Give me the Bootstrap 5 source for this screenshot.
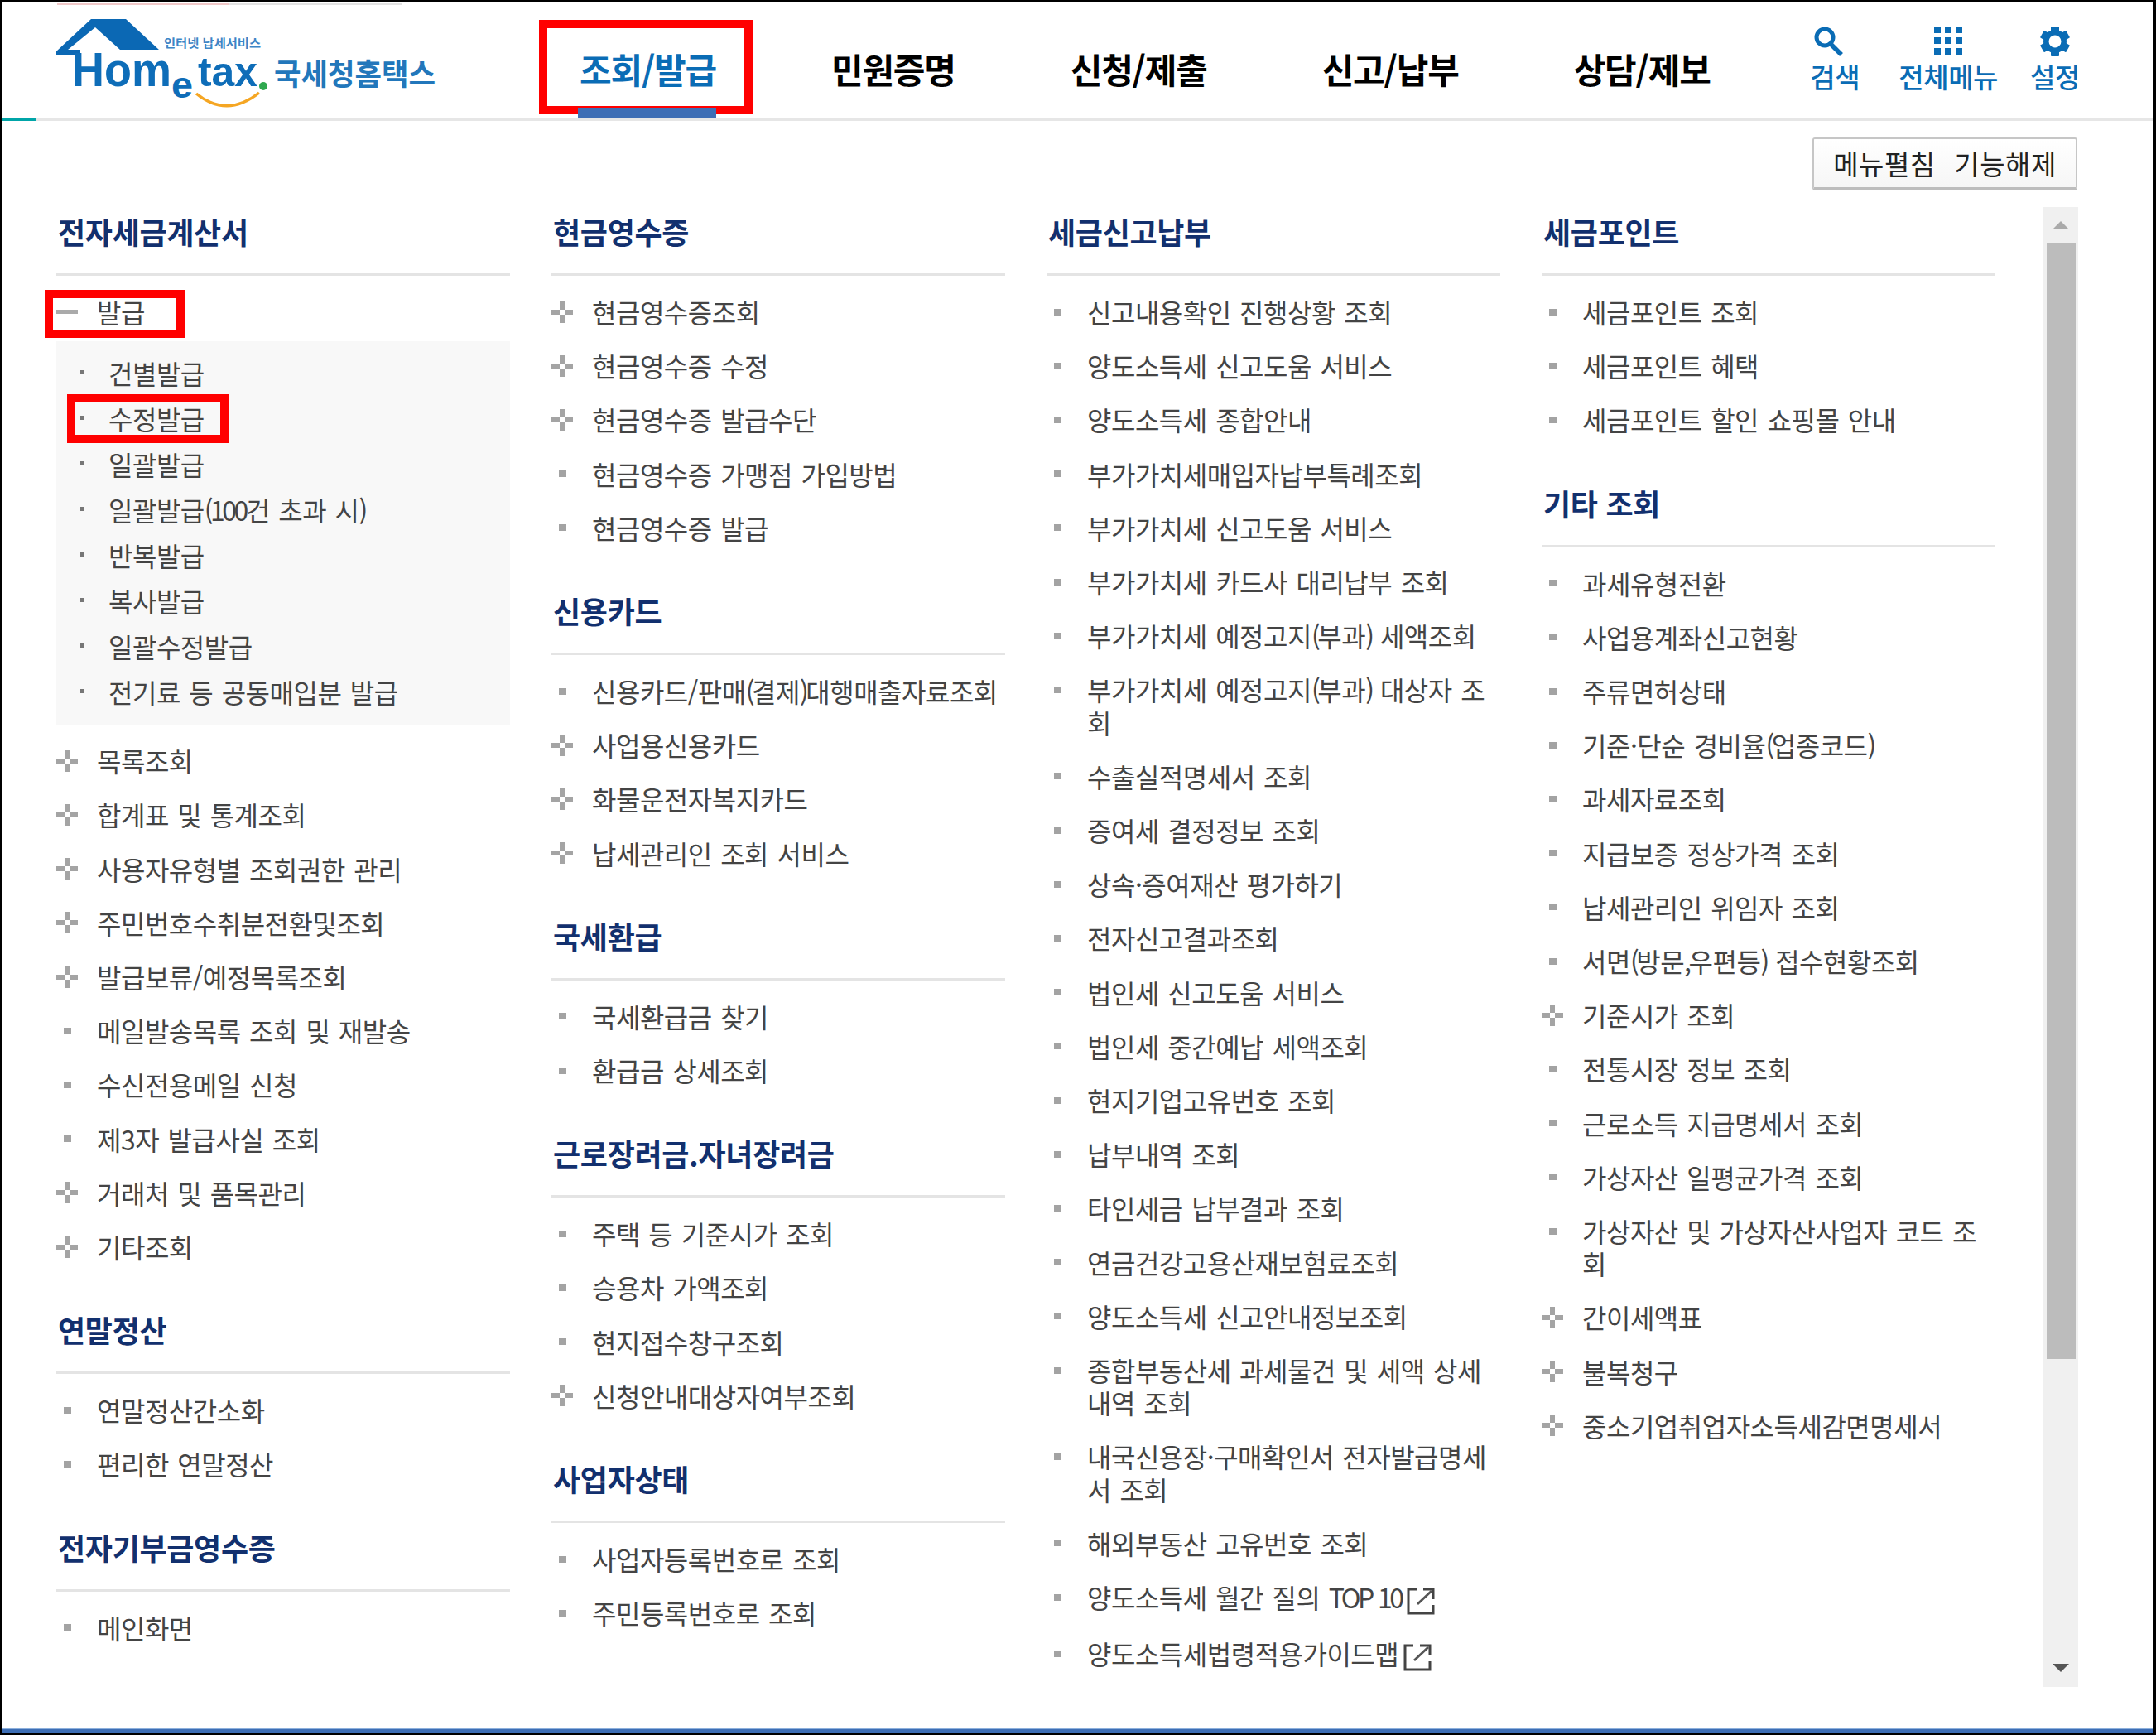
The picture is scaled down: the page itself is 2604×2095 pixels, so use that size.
<!DOCTYPE html>
<html lang="ko"><head><meta charset="utf-8"><title>Hometax</title>
<link href="https://cdn.jsdelivr.net/npm/bootstrap@5.3.0/dist/css/bootstrap.min.css" rel="stylesheet">
<style>
html,body{margin:0;background:#fff}
body{font-family:"Noto Sans CJK KR","Liberation Sans",sans-serif;color:#444}
.app{position:relative;width:2604px;height:2095px;border:solid #000;border-width:3px 4px 3px 3px;box-sizing:border-box}
.top-sliver{position:absolute;left:66px;top:1px;width:416px;height:2px;background:linear-gradient(90deg,#f0c8c8 0 50%,#e2e2e2 50%)}
.top-bar{position:relative;height:140px;border-bottom:3px solid #e6e6e6;padding:0 88px 0 63px;box-sizing:content-box}
.top-bar::before{content:"";position:absolute;left:0;bottom:-3px;width:40px;height:3px;background:#00a5a8}
.logo-svg{display:block;width:480px;height:140px;flex:none}
.main-nav{margin-left:154px;gap:139px}
.main-link{position:relative;display:block;padding-top:60px;font-size:42px;line-height:40px;letter-spacing:-1.2px;font-weight:700;color:#000;text-decoration:none;white-space:nowrap}
.main-link.on{color:#0a6cb5}
.main-link.on::after{content:"";position:absolute;left:-2px;right:0;top:127px;height:13px;background:#3d6eb5}
.tools{gap:39px}
.tool-link{display:flex;flex-direction:column;padding-top:29px;color:#0a6cb5;text-decoration:none;font-size:33px;line-height:44px;letter-spacing:-.4px;font-weight:500;white-space:nowrap}
.tool-link svg{display:block;height:36px;width:36px;margin-bottom:2px}
.redmark{position:absolute;border:10px solid #f00;pointer-events:none}
.rm-nav{left:-49px;top:21px;width:258px;height:114px}
.rm-a{left:-14px;top:6px;width:169px;height:58px}
.rm-b{left:13px;top:-1px;width:195px;height:59px}
.fold-btn{width:320px;height:64px;margin:20px 91px 20px auto;background:linear-gradient(#fff,#f6f6f6);border:2px solid #c6c6c6;border-bottom:4px solid #bdbdbd;border-radius:3px;font-size:33px;line-height:54px;color:#222;letter-spacing:.5px;word-spacing:13px;padding:0;display:block;font-family:inherit}
.scroll-zone{padding-left:65px}
.cols{gap:50px;padding-top:5px}
.mcol{width:548px;flex:none}
.sect-h{font-size:36px;line-height:48px;letter-spacing:-.3px;font-weight:700;color:#12306e;padding:0 0 27px 2px;margin:43px 0 11px;border-bottom:3px solid #e4e4e4;height:78px;box-sizing:border-box}
.mcol>.sect-h:first-child{margin-top:0}
.mlist{margin:0;padding:0;list-style:none}
.mitem{position:relative;display:flex;padding:13px 0;font-size:32px;line-height:39.2px;letter-spacing:-.5px;word-spacing:2px;color:#444}
.mk{flex:none;width:49px;height:39px;display:flex;align-items:center}
.mk svg{display:block}
.sq{width:9px;height:8px;margin-left:9px;background:#a3a3a3}
.minus{width:26px;height:5px;background:#aaa}
.subpanel{background:#f8f8f8;margin:3px 0 11px;padding:10px 0 13px}
.subitem{position:relative;display:flex;height:55px;align-items:center;padding-left:29px;font-size:32px;letter-spacing:-.5px;word-spacing:2px;color:#444}
.dot{flex:none;width:5px;height:5px;background:#777;margin-right:29px}
.tp{letter-spacing:-3.5px}
.xlink{display:inline-block;vertical-align:-9px;margin-left:6px}
.sbar{flex:none;width:42px;height:1787px;margin-left:58px;margin-top:0;background:#f0f0f0;display:flex;flex-direction:column;align-items:center}
.sb-up{height:43px;width:100%;display:flex;align-items:center;justify-content:center}
.sb-up i{display:block;border:solid transparent;border-width:0 10px 10px;border-bottom-color:#aaa}
.sb-thumb{width:35px;height:1348px;background:#bcbcbc}
.sb-dn{margin-top:auto;height:28px;width:100%;display:flex;justify-content:center;align-items:flex-start}
.sb-dn i{display:block;border:solid transparent;border-width:10px 10px 0;border-top-color:#555}
.foot-strip{position:absolute;left:0;right:0;bottom:0;height:5px;background:#3d6eb5;border-top:1px solid #8db0dc}
</style></head><body>
<svg width="0" height="0" class="position-absolute"><defs>
<symbol id="plus" viewBox="0 0 26 26"><path d="M10 0h6v10h-6zM10 16h6v10h-6zM0 10h10v6H0zM16 10h10v6H16z" fill="#a4a4a4"/></symbol>
<symbol id="ext" viewBox="0 0 34 34"><path d="M12 2H2V31H32V21" fill="none" stroke="#444" stroke-width="3"/><path d="M13 20 30 4" stroke="#555" stroke-width="3"/><path d="M20 2H32V14" fill="none" stroke="#444" stroke-width="3"/></symbol>
</defs></svg>
<div class="app">
<div class="top-sliver"></div>
<header class="top-bar d-flex">
<svg class="logo-svg" viewBox="66 3 480 140" aria-label="Hometax">
<path d="M110 23H152L192 60H145L115 33 82 60H97V104H90V67H68V62Z" fill="#0b68b4"/>
<text x="87" y="104" font-family="Liberation Sans" font-weight="700" font-size="58" textLength="120" lengthAdjust="spacingAndGlyphs" fill="#0e6db8">Hom</text>
<text x="207" y="118" font-family="Liberation Sans" font-weight="700" font-size="44" textLength="26" lengthAdjust="spacingAndGlyphs" fill="#0e6db8">e</text>
<text x="239" y="104" font-family="Liberation Sans" font-weight="700" font-size="50" textLength="72" lengthAdjust="spacingAndGlyphs" fill="#0e6db8">tax</text>
<circle cx="318" cy="104" r="5" fill="#2fa84f"/>
<path d="M237 113Q274 143 313 112" fill="none" stroke="#f5a623" stroke-width="3.500"/>
<text x="331" y="103" font-family="Noto Sans CJK KR" font-weight="700" font-size="36" textLength="195" lengthAdjust="spacingAndGlyphs" fill="#2277bb">국세청홈택스</text>
<text x="198" y="57" font-family="Noto Sans CJK KR" font-weight="700" font-size="14" textLength="117" lengthAdjust="spacingAndGlyphs" fill="#3d85c6">인터넷 납세서비스</text>
</svg>
<nav class="main-nav d-flex">
<a class="main-link on" href="#">조회/발급<span class="redmark rm-nav"></span></a>
<a class="main-link" href="#">민원증명</a>
<a class="main-link" href="#">신청/제출</a>
<a class="main-link" href="#">신고/납부</a>
<a class="main-link" href="#">상담/제보</a>
</nav>
<div class="tools d-flex ms-auto">
<a class="tool-link me-2" href="#"><svg class="ms-1" viewBox="0 0 36 36"><circle cx="14" cy="13" r="10" fill="none" stroke="#0a6cb5" stroke-width="5"/><path d="M21 21 34 34" stroke="#0a6cb5" stroke-width="5.5"/></svg>검색</a>
<a class="tool-link align-items-center" href="#"><svg viewBox="0 0 36 36"><path fill="#0a6cb5" d="M1 0h8v8H1zM14 0h8v8h-8zM27 0h8v8h-8zM1 13h8v8H1zM14 13h8v8h-8zM27 13h8v8h-8zM1 26h8v8H1zM14 26h8v8h-8zM27 26h8v8h-8z"/></svg>전체메뉴</a>
<a class="tool-link align-items-center" href="#"><svg viewBox="0 0 36 36"><g fill="#0a6cb5"><circle cx="18" cy="18" r="14"/><rect x="13" y="0" width="10" height="36" rx="1"/><rect x="13" y="0" width="10" height="36" rx="1" transform="rotate(60 18 18)"/><rect x="13" y="0" width="10" height="36" rx="1" transform="rotate(120 18 18)"/></g><circle cx="18" cy="18" r="7.500" fill="#fff"/></svg>설정</a>
</div>
</header>
<button type="button" class="fold-btn">메뉴펼침 기능해제</button>
<div class="scroll-zone d-flex">
<div class="cols d-flex">
<div class="mcol">
<h3 class="sect-h">전자세금계산서</h3>
<ul class="mlist">
<li class="mitem"><span class="mk"><span class="minus"></span></span>발급<span class="redmark rm-a"></span></li>
<li><div class="subpanel">
<div class="subitem"><span class="dot"></span>건별발급</div>
<div class="subitem"><span class="dot"></span>수정발급<span class="redmark rm-b"></span></div>
<div class="subitem"><span class="dot"></span>일괄발급</div>
<div class="subitem"><span class="dot"></span><span>일괄발급<span class="tp">(100</span>건 초과 시<span class="tp">)</span></span></div>
<div class="subitem"><span class="dot"></span>반복발급</div>
<div class="subitem"><span class="dot"></span>복사발급</div>
<div class="subitem"><span class="dot"></span>일괄수정발급</div>
<div class="subitem"><span class="dot"></span>전기료 등 공동매입분 발급</div>
</div></li>
<li class="mitem"><span class="mk"><svg width="26" height="26"><use href="#plus"/></svg></span>목록조회</li>
<li class="mitem"><span class="mk"><svg width="26" height="26"><use href="#plus"/></svg></span>합계표 및 통계조회</li>
<li class="mitem"><span class="mk"><svg width="26" height="26"><use href="#plus"/></svg></span>사용자유형별 조회권한 관리</li>
<li class="mitem"><span class="mk"><svg width="26" height="26"><use href="#plus"/></svg></span>주민번호수취분전환및조회</li>
<li class="mitem"><span class="mk"><svg width="26" height="26"><use href="#plus"/></svg></span>발급보류/예정목록조회</li>
<li class="mitem"><span class="mk"><span class="sq"></span></span>메일발송목록 조회 및 재발송</li>
<li class="mitem"><span class="mk"><span class="sq"></span></span>수신전용메일 신청</li>
<li class="mitem"><span class="mk"><span class="sq"></span></span>제3자 발급사실 조회</li>
<li class="mitem"><span class="mk"><svg width="26" height="26"><use href="#plus"/></svg></span>거래처 및 품목관리</li>
<li class="mitem"><span class="mk"><svg width="26" height="26"><use href="#plus"/></svg></span>기타조회</li>
</ul>
<h3 class="sect-h">연말정산</h3>
<ul class="mlist">
<li class="mitem"><span class="mk"><span class="sq"></span></span>연말정산간소화</li>
<li class="mitem"><span class="mk"><span class="sq"></span></span>편리한 연말정산</li>
</ul>
<h3 class="sect-h">전자기부금영수증</h3>
<ul class="mlist">
<li class="mitem"><span class="mk"><span class="sq"></span></span>메인화면</li>
</ul>
</div>
<div class="mcol">
<h3 class="sect-h">현금영수증</h3>
<ul class="mlist">
<li class="mitem"><span class="mk"><svg width="26" height="26"><use href="#plus"/></svg></span>현금영수증조회</li>
<li class="mitem"><span class="mk"><svg width="26" height="26"><use href="#plus"/></svg></span>현금영수증 수정</li>
<li class="mitem"><span class="mk"><svg width="26" height="26"><use href="#plus"/></svg></span>현금영수증 발급수단</li>
<li class="mitem"><span class="mk"><span class="sq"></span></span>현금영수증 가맹점 가입방법</li>
<li class="mitem"><span class="mk"><span class="sq"></span></span>현금영수증 발급</li>
</ul>
<h3 class="sect-h">신용카드</h3>
<ul class="mlist">
<li class="mitem"><span class="mk"><span class="sq"></span></span><span>신용카드/판매<span class="tp">(</span>결제<span class="tp">)</span>대행매출자료조회</span></li>
<li class="mitem"><span class="mk"><svg width="26" height="26"><use href="#plus"/></svg></span>사업용신용카드</li>
<li class="mitem"><span class="mk"><svg width="26" height="26"><use href="#plus"/></svg></span>화물운전자복지카드</li>
<li class="mitem"><span class="mk"><svg width="26" height="26"><use href="#plus"/></svg></span>납세관리인 조회 서비스</li>
</ul>
<h3 class="sect-h">국세환급</h3>
<ul class="mlist">
<li class="mitem"><span class="mk"><span class="sq"></span></span>국세환급금 찾기</li>
<li class="mitem"><span class="mk"><span class="sq"></span></span>환급금 상세조회</li>
</ul>
<h3 class="sect-h">근로장려금.자녀장려금</h3>
<ul class="mlist">
<li class="mitem"><span class="mk"><span class="sq"></span></span>주택 등 기준시가 조회</li>
<li class="mitem"><span class="mk"><span class="sq"></span></span>승용차 가액조회</li>
<li class="mitem"><span class="mk"><span class="sq"></span></span>현지접수창구조회</li>
<li class="mitem"><span class="mk"><svg width="26" height="26"><use href="#plus"/></svg></span>신청안내대상자여부조회</li>
</ul>
<h3 class="sect-h">사업자상태</h3>
<ul class="mlist">
<li class="mitem"><span class="mk"><span class="sq"></span></span>사업자등록번호로 조회</li>
<li class="mitem"><span class="mk"><span class="sq"></span></span>주민등록번호로 조회</li>
</ul>
</div>
<div class="mcol">
<h3 class="sect-h">세금신고납부</h3>
<ul class="mlist">
<li class="mitem"><span class="mk"><span class="sq"></span></span>신고내용확인 진행상황 조회</li>
<li class="mitem"><span class="mk"><span class="sq"></span></span>양도소득세 신고도움 서비스</li>
<li class="mitem"><span class="mk"><span class="sq"></span></span>양도소득세 종합안내</li>
<li class="mitem"><span class="mk"><span class="sq"></span></span>부가가치세매입자납부특례조회</li>
<li class="mitem"><span class="mk"><span class="sq"></span></span>부가가치세 신고도움 서비스</li>
<li class="mitem"><span class="mk"><span class="sq"></span></span>부가가치세 카드사 대리납부 조회</li>
<li class="mitem"><span class="mk"><span class="sq"></span></span><span>부가가치세 예정고지<span class="tp">(</span>부과<span class="tp">)</span> 세액조회</span></li>
<li class="mitem"><span class="mk"><span class="sq"></span></span><span>부가가치세 예정고지<span class="tp">(</span>부과<span class="tp">)</span> 대상자 조<br>회</span></li>
<li class="mitem"><span class="mk"><span class="sq"></span></span>수출실적명세서 조회</li>
<li class="mitem"><span class="mk"><span class="sq"></span></span>증여세 결정정보 조회</li>
<li class="mitem"><span class="mk"><span class="sq"></span></span>상속·증여재산 평가하기</li>
<li class="mitem"><span class="mk"><span class="sq"></span></span>전자신고결과조회</li>
<li class="mitem"><span class="mk"><span class="sq"></span></span>법인세 신고도움 서비스</li>
<li class="mitem"><span class="mk"><span class="sq"></span></span>법인세 중간예납 세액조회</li>
<li class="mitem"><span class="mk"><span class="sq"></span></span>현지기업고유번호 조회</li>
<li class="mitem"><span class="mk"><span class="sq"></span></span>납부내역 조회</li>
<li class="mitem"><span class="mk"><span class="sq"></span></span>타인세금 납부결과 조회</li>
<li class="mitem"><span class="mk"><span class="sq"></span></span>연금건강고용산재보험료조회</li>
<li class="mitem"><span class="mk"><span class="sq"></span></span>양도소득세 신고안내정보조회</li>
<li class="mitem"><span class="mk"><span class="sq"></span></span><span>종합부동산세 과세물건 및 세액 상세<br>내역 조회</span></li>
<li class="mitem"><span class="mk"><span class="sq"></span></span><span>내국신용장·구매확인서 전자발급명세<br>서 조회</span></li>
<li class="mitem"><span class="mk"><span class="sq"></span></span>해외부동산 고유번호 조회</li>
<li class="mitem"><span class="mk"><span class="sq"></span></span><span>양도소득세 월간 질의 <span class="tp">TOP 10</span><svg class="xlink" width="34" height="34"><use href="#ext"/></svg></span></li>
<li class="mitem"><span class="mk"><span class="sq"></span></span><span>양도소득세법령적용가이드맵<svg class="xlink" width="34" height="34"><use href="#ext"/></svg></span></li>
</ul>
</div>
<div class="mcol">
<h3 class="sect-h">세금포인트</h3>
<ul class="mlist">
<li class="mitem"><span class="mk"><span class="sq"></span></span>세금포인트 조회</li>
<li class="mitem"><span class="mk"><span class="sq"></span></span>세금포인트 혜택</li>
<li class="mitem"><span class="mk"><span class="sq"></span></span>세금포인트 할인 쇼핑몰 안내</li>
</ul>
<h3 class="sect-h">기타 조회</h3>
<ul class="mlist">
<li class="mitem"><span class="mk"><span class="sq"></span></span>과세유형전환</li>
<li class="mitem"><span class="mk"><span class="sq"></span></span>사업용계좌신고현황</li>
<li class="mitem"><span class="mk"><span class="sq"></span></span>주류면허상태</li>
<li class="mitem"><span class="mk"><span class="sq"></span></span><span>기준·단순 경비율<span class="tp">(</span>업종코드<span class="tp">)</span></span></li>
<li class="mitem"><span class="mk"><span class="sq"></span></span>과세자료조회</li>
<li class="mitem"><span class="mk"><span class="sq"></span></span>지급보증 정상가격 조회</li>
<li class="mitem"><span class="mk"><span class="sq"></span></span>납세관리인 위임자 조회</li>
<li class="mitem"><span class="mk"><span class="sq"></span></span><span>서면<span class="tp">(</span>방문<span class="tp">,</span>우편등<span class="tp">)</span> 접수현황조회</span></li>
<li class="mitem"><span class="mk"><svg width="26" height="26"><use href="#plus"/></svg></span>기준시가 조회</li>
<li class="mitem"><span class="mk"><span class="sq"></span></span>전통시장 정보 조회</li>
<li class="mitem"><span class="mk"><span class="sq"></span></span>근로소득 지급명세서 조회</li>
<li class="mitem"><span class="mk"><span class="sq"></span></span>가상자산 일평균가격 조회</li>
<li class="mitem"><span class="mk"><span class="sq"></span></span><span>가상자산 및 가상자산사업자 코드 조<br>회</span></li>
<li class="mitem"><span class="mk"><svg width="26" height="26"><use href="#plus"/></svg></span>간이세액표</li>
<li class="mitem"><span class="mk"><svg width="26" height="26"><use href="#plus"/></svg></span>불복청구</li>
<li class="mitem"><span class="mk"><svg width="26" height="26"><use href="#plus"/></svg></span>중소기업취업자소득세감면명세서</li>
</ul>
</div>
</div>
<div class="sbar"><div class="sb-up"><i></i></div><div class="sb-thumb"></div><div class="sb-dn"><i></i></div></div>
</div>
<div class="foot-strip"></div>
</div>
<script src="https://cdn.jsdelivr.net/npm/bootstrap@5.3.0/dist/js/bootstrap.bundle.min.js"></script>
</body></html>
